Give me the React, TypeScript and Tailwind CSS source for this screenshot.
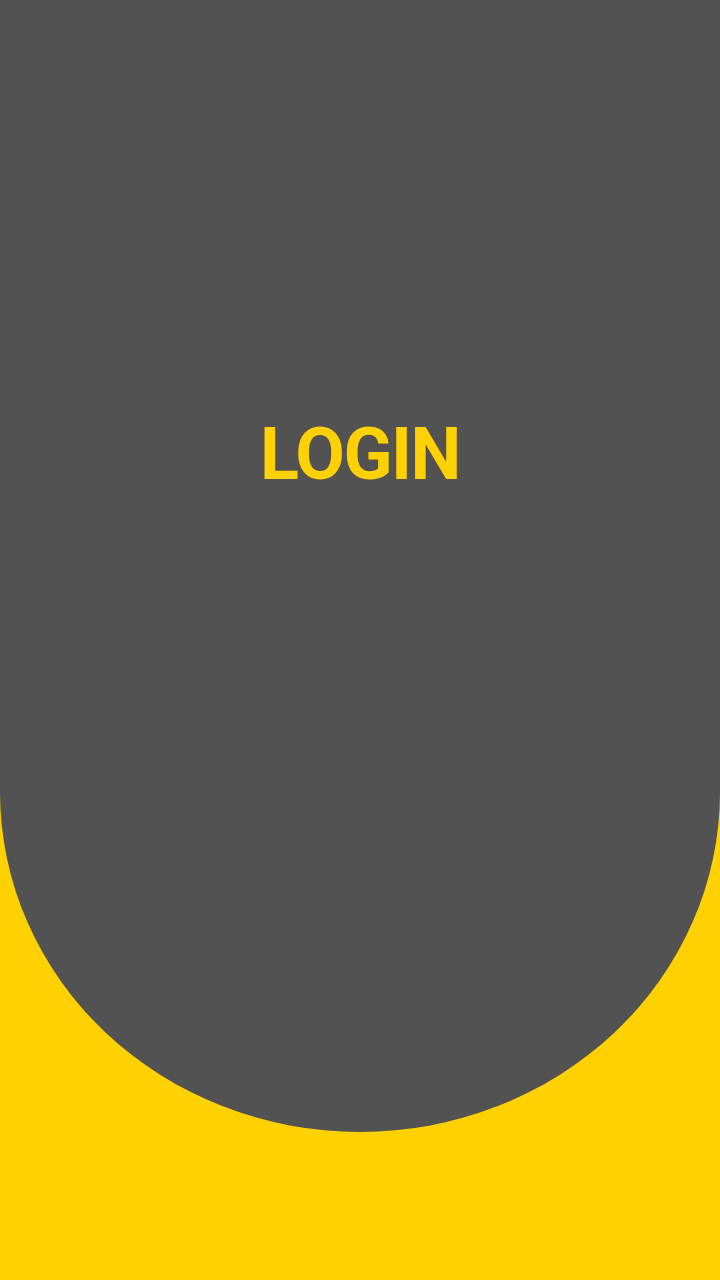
export default function App() {
  return (
    <div className="w-[720px] h-[1280px] bg-[#ffd100] overflow-hidden">
      <div className="h-[1132px] bg-[#525252] rounded-bl-[360px_340px] rounded-br-[360px_340px] flex justify-center pt-[410px]">
        <h1
          className="text-[#ffd100] text-[72px] font-bold leading-[90px] tracking-[-1.5px]"
          style={{ fontFamily: 'Roboto, sans-serif' }}
        >
          LOGIN
        </h1>
      </div>
    </div>
  );
}
